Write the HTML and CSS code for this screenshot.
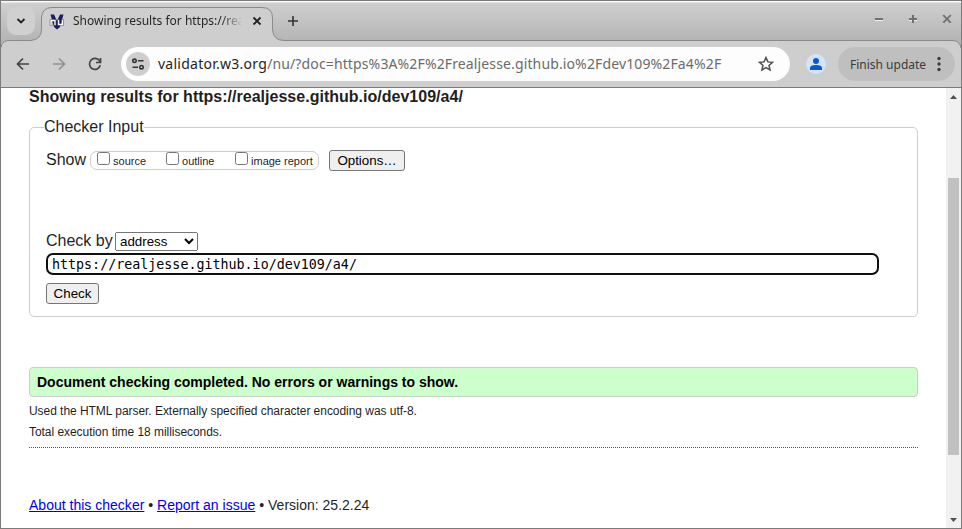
FILE: index.html
```html
<!DOCTYPE html>
<html lang="en">
<head>
<meta charset="utf-8">
<title>Showing results for https://realjesse.github.io/dev109/a4/</title>
<link rel="stylesheet" href="styles.css">
</head>
<body>
<div class="window">
  <svg class="frame-shape" width="960" height="50" viewBox="1 1 960 50" aria-hidden="true">
    <path class="tab-fill" d="M1 51V47.500Q2 40.500 9 40.500H31Q41.500 39.500 41.500 29V18Q42 7.500 52 7.500H262Q272.500 7.500 272.500 18V29Q273 40.500 284 40.500H953Q960 41 961 48V51Z"/>
    <path class="tab-line" d="M1 47.500Q2 40.500 9 40.500H31Q41.500 39.500 41.500 29V18Q42 7.500 52 7.500H262Q272.500 7.500 272.500 18V29Q273 40.500 284 40.500H953Q960 41 961 48"/>
  </svg>
  <header class="tabs">
    <div class="tab-search"><svg width="10" height="8" viewBox="0 0 10 8"><path d="M1.500 2L5 5.500L8.500 2" fill="none" stroke="#222" stroke-width="1.800"/></svg></div>
    <div class="tab">
      <svg class="favicon" width="16" height="16" viewBox="0 0 16 16">
        <path d="M1.500 0.500H5L8 7L11 0.500H14.500L11 13L8 15.500L5 13Z" fill="#1c1c66"/>
        <g fill="none" stroke-linecap="square"><path d="M2 10.500V6.500H6V10.500M9.500 6.500V10.500H13.500V6.500" stroke="#444" stroke-opacity=".7" stroke-width="2.600"/><path d="M2 10.500V6.500H6V10.500M9.500 6.500V10.500H13.500V6.500" stroke="#fff" stroke-width="1.300"/></g>
      </svg>
      <span class="tab-title">Showing results for https://rea</span>
      <svg class="tab-close" width="10" height="10" viewBox="0 0 10 10"><path d="M1.500 1.500L8.500 8.500M8.500 1.500L1.500 8.500" stroke="#222" stroke-width="1.800"/></svg>
    </div>
    <svg class="new-tab" width="12" height="12" viewBox="0 0 12 12"><path d="M6 1V11M1 6H11" stroke="#333" stroke-width="1.600"/></svg>
    <div class="controls">
      <svg width="10" height="10" viewBox="0 0 10 10"><path d="M1 6.500H9" stroke="#eee"/><path d="M1 5H9" stroke="#707070" stroke-width="2"/></svg>
      <svg width="10" height="10" viewBox="0 0 10 10"><path d="M1 6.500H9" stroke="#eee"/><path d="M1 5H9M5 1V9" stroke="#707070" stroke-width="2"/></svg>
      <svg width="10" height="10" viewBox="0 0 10 10"><path d="M1 2L9 10M9 2L1 10" stroke="#e5e5e5"/><path d="M1.200 1.200L8.800 8.800M8.800 1.200L1.200 8.800" stroke="#707070" stroke-width="1.900"/></svg>
    </div>
  </header>
  <nav class="toolbar">
    <svg class="nav-icon" width="14" height="14" viewBox="0 0 14 14"><path d="M13 7H2M7 1.500L1.500 7L7 12.500" fill="none" stroke="#444" stroke-width="1.700"/></svg>
    <svg class="nav-icon" width="14" height="14" viewBox="0 0 14 14"><path d="M1 7H12M7 1.500L12.500 7L7 12.500" fill="none" stroke="#909090" stroke-width="1.700"/></svg>
    <svg class="nav-icon" width="14" height="14" viewBox="0 0 14 14"><path d="M12.300 8.300A5.500 5.500 0 1 1 11.500 3.800L12.500 5" fill="none" stroke="#444" stroke-width="1.700"/><path d="M12.500 1V5.500H8" fill="none" stroke="#444" stroke-width="1.700"/></svg>
    <div class="omnibox">
      <span class="site-info"><svg width="14" height="12" viewBox="0 0 14 12" fill="none" stroke="#333" stroke-width="1.600"><circle cx="3.500" cy="2.800" r="1.700"/><path d="M7 2.800H12.500M1.500 9.200H7"/><circle cx="10.500" cy="9.200" r="1.700"/></svg></span>
      <span class="url"><b>validator.w3.org</b>/nu/?doc=https%3A%2F%2Frealjesse.github.io%2Fdev109%2Fa4%2F</span>
      <svg class="star" width="16" height="16" viewBox="0 0 16 16"><path d="M8 1.600L9.900 5.900L14.500 6.300L11 9.400L12.100 14L8 11.600L3.900 14L5 9.400L1.500 6.300L6.100 5.900Z" fill="none" stroke="#505050" stroke-width="1.500"/></svg>
    </div>
    <svg class="avatar" width="20" height="20" viewBox="0 0 20 20"><circle cx="10" cy="10" r="10" fill="#d3e3fd"/><circle cx="10" cy="7" r="3" fill="#0b57d0"/><path d="M4 16V14Q4 11 10 11T16 14V16Z" fill="#0b57d0"/></svg>
    <div class="update"><span>Finish update</span><svg width="4" height="16" viewBox="0 0 4 16" fill="#3c3c3c"><circle cx="2" cy="2.500" r="1.700"/><circle cx="2" cy="8" r="1.700"/><circle cx="2" cy="13.500" r="1.700"/></svg></div>
  </nav>
  <div class="viewport">
    <main class="page">
      <h1>Showing results for https://realjesse.github.io/dev109/a4/</h1>
      <fieldset class="input-area">
        <legend>Checker Input</legend>
        <div class="show-row">
          <span>Show</span>
          <div class="checks">
            <label><input type="checkbox"><span>source</span></label>
            <label><input type="checkbox"><span>outline</span></label>
            <label><input type="checkbox"><span>image report</span></label>
          </div>
          <button class="options">Options…</button>
        </div>
        <div class="by-row"><label for="method">Check by</label><select id="method"><option>address</option></select></div>
        <input class="address" type="text" value="https://realjesse.github.io/dev109/a4/" spellcheck="false">
        <button class="check">Check</button>
      </fieldset>
      <p class="success">Document checking completed. No errors or warnings to show.</p>
      <p class="detail">Used the HTML parser. Externally specified character encoding was utf-8.</p>
      <p class="detail">Total execution time 18 milliseconds.</p>
      <footer><a href="#">About this checker</a> • <a href="#">Report an issue</a> • Version: 25.2.24</footer>
    </main>
    <div class="scrollbar">
      <svg width="7" height="4" viewBox="0 0 7 4"><path d="M0 4L3.500 0L7 4Z" fill="#505050"/></svg>
      <div class="thumb"></div>
      <svg width="7" height="4" viewBox="0 0 7 4"><path d="M0 0L3.500 4L7 0Z" fill="#505050"/></svg>
    </div>
  </div>
</div>
</body>
</html>
```
FILE: styles.css
```css
* { box-sizing: border-box; }
body { margin: 0; overflow: hidden; }
svg { display: block; flex: none; }
.window {
  position: relative;
  width: 962px;
  height: 529px;
  border: 1px solid #7b7b7b;
  display: flex;
  flex-direction: column;
  background: linear-gradient(#fafafa 1px, #cfcfcf 2px, #b4b4b4 40px);
  font-family: "Noto Sans", sans-serif;
}
.frame-shape { position: absolute; left: 0; top: 0; }
.tab-fill { fill: #cecece; }
.tab-line { fill: none; stroke: #8a8a8a; }
.tabs { position: relative; height: 40px; display: flex; align-items: center; flex: none; }
.tab-search {
  width: 28px; height: 28px; margin-left: 6px; border-radius: 9px;
  background: #d0d0d0; display: grid; place-items: center;
}
.tab { display: flex; align-items: center; width: 231px; margin-left: 6px; padding-left: 8px; }
.favicon { margin-top: 1px; }
.tab-title {
  width: 168px; margin-left: 8px; white-space: nowrap;
  font-size: 12px; line-height: 18px; color: #282828;
  -webkit-mask-image: linear-gradient(90deg, #000 148px, transparent 170px);
  mask-image: linear-gradient(90deg, #000 148px, transparent 170px);
}
.tab-close { margin-left: 11px; }
.new-tab { margin-left: 15px; }
.controls { margin: -4px 9px 0 auto; display: flex; gap: 24px; }
.toolbar {
  position: relative; height: 47px; flex: none; display: flex; align-items: center;
  border-bottom: 1px solid #7b7b7b; background: linear-gradient(transparent 8px, #cecece 8px);
  padding: 0 6px 0 15px;
}
.nav-icon { margin-right: 22px; }
.omnibox {
  height: 34px; width: 669px; margin-left: -3px; padding: 0 16px 0 5px; border-radius: 17px;
  background: #fdfdfd; display: flex; align-items: center;
}
.site-info { width: 24px; height: 24px; border-radius: 50%; background: #cecece; display: grid; place-items: center; }
.url { margin-left: 8px; font-size: 14px; line-height: 20px; letter-spacing: 0.13px; color: #6b6b6b; white-space: nowrap; }
.url b { font-weight: 400; letter-spacing: 0.26px; color: #1f1f1f; }
.star { margin-left: auto; }
.avatar { margin-left: 16px; }
.update {
  width: 117px; height: 34px; margin-left: 12px; padding: 0 14px 0 12px; border-radius: 17px;
  background: #bfbfbf; color: #3c3c3c; font-size: 12px; display: flex; align-items: center; justify-content: space-between;
}
.viewport { flex: 1; min-height: 0; display: flex; background: #fff; font-family: "Liberation Sans", Arial, sans-serif; color: #1f1f1f; }
.page { width: 889px; margin-left: 28px; }
h1 { margin: -1px 0 0; font-size: 16px; line-height: 20px; letter-spacing: 0.015px; }
.input-area {
  height: 199px; margin: 11px 0 0; padding: 13px 38px 0 16px; border: 1px solid #ccc; border-radius: 5px;
  font-size: 16px;
}
legend { padding: 0; margin-left: -2px; line-height: 18px; }
.show-row { display: flex; align-items: center; height: 22px; }
.checks {
  display: flex; align-items: center; width: 229px; height: 19px; margin-left: 4px; padding-left: 6px;
  border: 1px solid #ccc; border-radius: 7px; font-size: 11px;
}
.checks label { display: flex; align-items: center; width: 69px; white-space: nowrap; }
.checks input { width: 13px; height: 13px; margin: -4px 3px 0 0; flex: none; }
.checks label span { padding-top: 1px; }
button { font: 13.333px "Liberation Sans", Arial, sans-serif; height: 21px; padding: 1px 6px; border: 1px solid #767676; border-radius: 3px; background: #efefef; color: #000; }
.options { width: 76px; margin-left: 10px; }
.by-row { display: flex; align-items: center; margin-top: 60px; height: 20px; }
.by-row label { width: 66px; white-space: nowrap; }
select { width: 83px; height: 19px; margin: 1px 0 0 3px; font: 13.333px "Liberation Sans", Arial, sans-serif; }
.address {
  display: block; width: 833px; height: 22px; margin: 2px 0 8px; padding: 0 4px; border: 2px solid #101010; border-radius: 7px;
  outline: none; font: 13.333px "DejaVu Sans Mono", monospace; color: #000;
}
.check { display: block; width: 53px; }
.success {
  height: 30px; margin: 50px 0 5px; padding: 0 7px; border: 1px solid #ccc; border-radius: 4px;
  background: #cfc; color: #000; font-size: 14px; font-weight: 700; line-height: 28px;
}
.detail { margin: 0; font-size: 12px; line-height: 18px; letter-spacing: -0.045px; padding-bottom: 3px; }
.detail + .detail { padding-bottom: 6px; border-bottom: 1px dotted #555; }
footer { margin-top: 48px; font-size: 14px; line-height: 18px; letter-spacing: 0.01px; }
a { color: #0000ee; }
.scrollbar { width: 15px; margin-left: auto; padding: 7px 0 6px; background: #f1f1f1; display: flex; flex-direction: column; align-items: center; }
.thumb { width: 11px; height: 277px; margin: 79px 0 auto; background: #c1c1c1; }
```
